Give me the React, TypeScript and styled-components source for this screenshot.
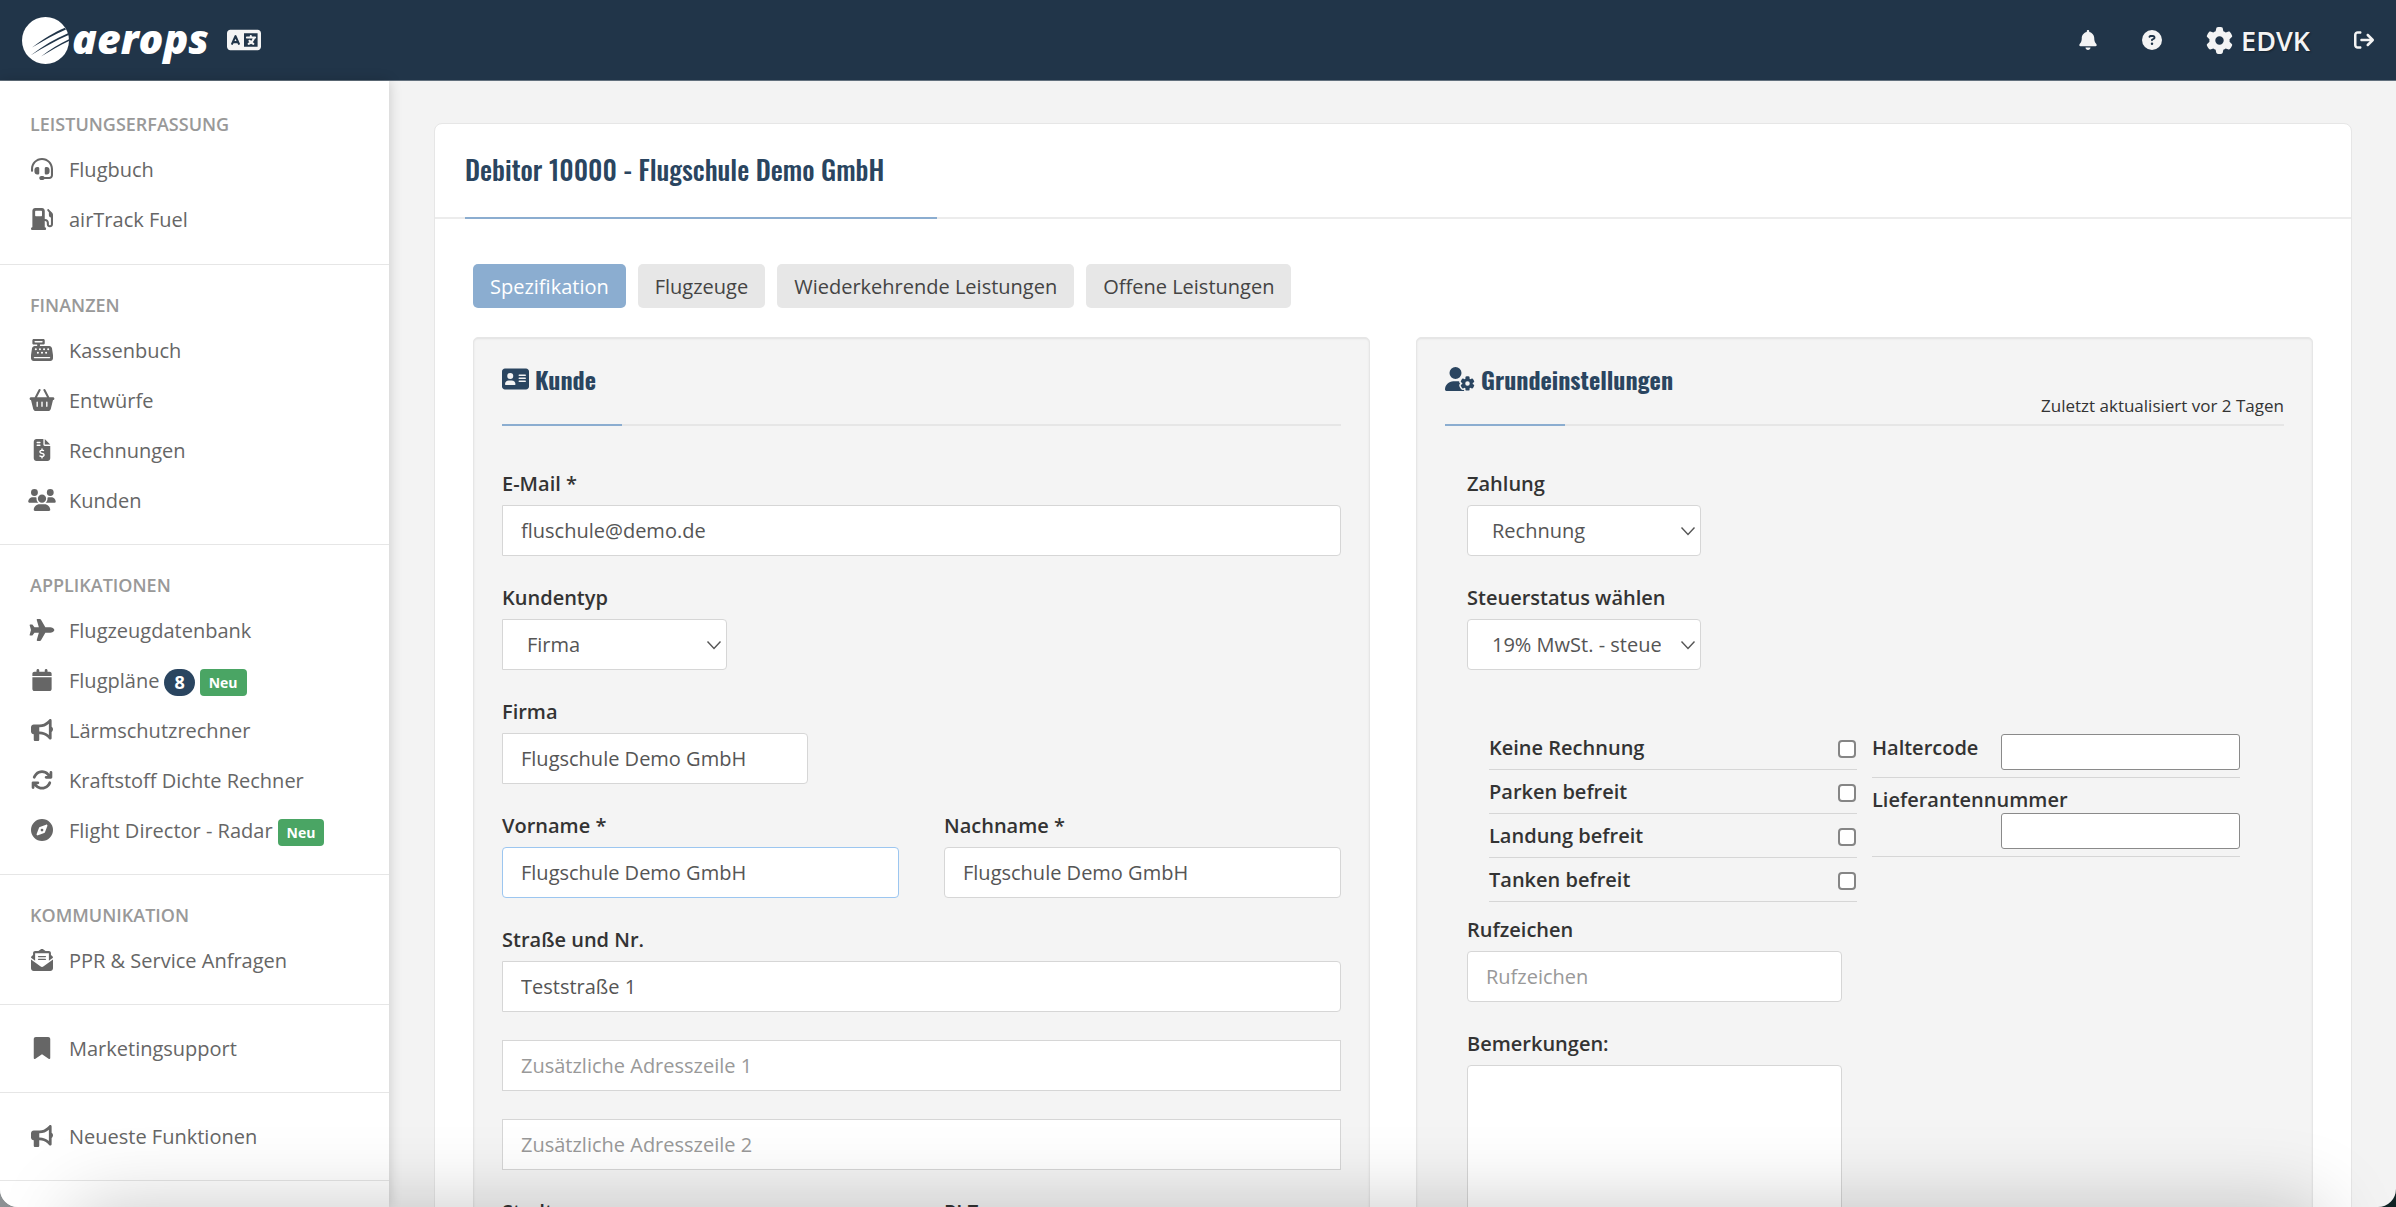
import React, { useId } from 'react';
import styled, { createGlobalStyle, css } from 'styled-components';
import {
  FaAddressCard,
  FaArrowRightFromBracket,
  FaArrowsRotate,
  FaBasketShopping,
  FaBell,
  FaBookmark,
  FaBullhorn,
  FaCalendar,
  FaCashRegister,
  FaCircleQuestion,
  FaCompass,
  FaEnvelopeOpenText,
  FaFileInvoiceDollar,
  FaGasPump,
  FaGear,
  FaHeadset,
  FaLanguage,
  FaPlane,
  FaUserGear,
  FaUsers,
} from 'react-icons/fa6';

const color = {
  navy: '#213549',
  heading: '#2a4560',
  blue: '#8badd0',
  canvas: '#f3f3f3',
  panel: '#f4f4f4',
  line: '#e6e6e6',
  rule: '#d6d6d6',
  menu: '#666666',
  text: '#333333',
  value: '#555555',
  muted: '#999999',
  green: '#4aa564',
};

const GlobalStyle = createGlobalStyle`
  *, *::before, *::after { box-sizing: border-box; }
  html, body, #root { height: 100%; }
  body {
    margin: 0;
    background: linear-gradient(to right, #8c9093, #0e2224);
    color: ${color.text};
    font: 20px/27px "Open Sans", "Noto Sans", sans-serif;
  }
  button, input, select, textarea { font: inherit; color: inherit; }
  a { color: inherit; text-decoration: none; }
`;

const Shell = styled.div`
  position: relative;
  display: flex;
  flex-direction: column;
  height: 100vh;
  overflow: hidden;
  border-radius: 0 0 18px 18px;
  background: ${color.canvas};
`;

/* Soft shade that lies over the lower edge of the window. */
const BottomShade = styled.div`
  position: absolute;
  top: 100%;
  left: 76px;
  right: 76px;
  height: 200px;
  box-shadow: 0 0 80px 0 rgba(0, 0, 0, 0.22);
  pointer-events: none;
`;

/* ---------- top bar ---------- */

const TopBar = styled.header`
  display: flex;
  align-items: center;
  flex: none;
  height: 81px;
  padding: 0 22px;
  background: ${color.navy};
  border-bottom: 1px solid #62707d;
  color: #f4f4f4;
`;

const Brand = styled.a`
  display: flex;
  align-items: center;
  gap: 3px;
  color: #fff;
  svg { display: block; width: 47px; height: 47px; }
`;

const BrandName = styled.span`
  padding-bottom: 4px;
  font: italic 800 41px/48px "Open Sans", sans-serif;
`;

const LanguageButton = styled.button`
  display: flex;
  margin-left: 18px;
  padding: 0;
  border: 0;
  background: none;
  svg { width: 34px; height: 28px; }
`;

const TopActions = styled.nav`
  display: flex;
  align-items: center;
  gap: 44px;
  margin-left: auto;
`;

const TopAction = styled.a<{ $large?: boolean }>`
  display: flex;
  align-items: center;
  gap: 8px;
  font-size: 27px;
  font-weight: 600;
  text-shadow: 1px 1px 2px rgba(0, 0, 0, 0.4);
  svg { display: block; width: auto; height: ${p => (p.$large ? 27 : 20)}px; }
`;

/* ---------- side bar ---------- */

const Body = styled.div`
  display: flex;
  flex: 1;
  min-height: 0;
`;

const SideBar = styled.aside`
  position: relative;
  flex: none;
  width: 389px;
  background: #fff;
  box-shadow: 0 0 12px rgba(0, 0, 0, 0.18);
`;

const MenuGroup = styled.section<{ $first?: boolean; $plain?: boolean }>`
  padding: ${p => (p.$first ? '23px 30px 20px' : p.$plain ? '18px 30px 19px' : '20px 30px 19px')};
  & + & { border-top: 1px solid ${color.line}; }
`;

const MenuTitle = styled.h2`
  margin: 0;
  color: ${color.muted};
  font-size: 18px;
  font-weight: 600;
  line-height: 40px;
  text-transform: uppercase;
`;

const MenuList = styled.ul`
  margin: 0;
  padding: 0;
  list-style: none;
`;

const MenuLink = styled.a`
  display: flex;
  align-items: center;
  height: 50px;
  color: ${color.menu};
  white-space: nowrap;
`;

const MenuIcon = styled.span`
  display: flex;
  justify-content: center;
  width: 24px;
  margin-right: 15px;
  svg { flex: none; width: 28px; height: 22px; }
`;

const Badge = styled.span<{ $round?: boolean }>`
  margin: 4px 0 0 5px;
  padding: 0 ${p => (p.$round ? 10 : 9)}px;
  border-radius: ${p => (p.$round ? 14 : 4)}px;
  background: ${p => (p.$round ? color.heading : color.green)};
  color: #fff;
  font-size: ${p => (p.$round ? 18 : 14)}px;
  font-weight: 700;
`;

/* ---------- content ---------- */

const Main = styled.main`
  flex: 1;
  min-width: 0;
  padding: 42px 44px 0 45px;
  overflow: auto;
  scrollbar-width: none;
`;

const Card = styled.article`
  border: 1px solid ${color.line};
  border-radius: 8px;
  background: #fff;
`;

const CardHeader = styled.header`
  padding: 28px 0 0 30px;
  border-bottom: 2px solid #ececec;
`;

const CardTitle = styled.h1`
  margin: 0 0 -2px;
  color: ${color.heading};
  font: 500 27px/34px "Oswald", "Liberation Sans Narrow", "Open Sans", sans-serif;
  &::after {
    content: "";
    display: block;
    width: 25%;
    height: 2px;
    margin-top: 31px;
    background: ${color.blue};
  }
`;

const CardBody = styled.div`
  padding: 45px 38px 0;
`;

const Tabs = styled.div`
  display: flex;
  gap: 12px;
  margin-bottom: 29px;
`;

const Tab = styled.button<{ $active?: boolean }>`
  height: 44px;
  padding: 0 17px;
  border: 0;
  border-radius: 5px;
  background: ${p => (p.$active ? color.blue : '#e7e7e7')};
  color: ${p => (p.$active ? '#fff' : '#444')};
`;

const Columns = styled.form`
  display: grid;
  grid-template-columns: 1fr 1fr;
  gap: 46px;
`;

const Panel = styled.section`
  min-width: 0;
  padding: 23px 28px 60px;
  border: 1px solid ${color.line};
  border-radius: 5px;
  background: ${color.panel};
  box-shadow: inset 0 1px 2px rgba(0, 0, 0, 0.08);
`;

const PanelHeader = styled.header`
  display: flex;
  align-items: flex-end;
  justify-content: space-between;
  height: 65px;
  margin-bottom: 44px;
  border-bottom: 2px solid ${color.line};
`;

const PanelTitle = styled.h2`
  display: flex;
  flex-direction: column;
  align-self: stretch;
  justify-content: space-between;
  margin: 0 0 -2px;
  color: ${color.heading};
  font: 700 24px/36px "Oswald", "Liberation Sans Narrow", "Open Sans", sans-serif;
  &::after {
    content: "";
    width: 120px;
    height: 2px;
    background: ${color.blue};
  }
`;

const PanelTitleText = styled.span<{ $icon: number }>`
  display: flex;
  align-items: center;
  gap: 6px;
  svg { width: ${p => p.$icon}px; height: 24px; }
`;

const Updated = styled.p`
  margin: 0 0 5px;
  font-size: 17px;
`;

const Inset = styled.div`
  padding: 0 22px;
`;

const Field = styled.div`
  display: flex;
  flex-direction: column;
  align-items: flex-start;
  gap: 8px;
  min-width: 0;
  margin-bottom: 28px;
`;

const Label = styled.label`
  font-weight: 600;
`;

const radius = { all: '4px', right: '0 4px 4px 0', none: '0' };
type Corners = keyof typeof radius;

const box = css<{ $width?: string; $corners?: Corners }>`
  width: ${p => p.$width ?? '100%'};
  border: 1px solid ${color.rule};
  border-radius: ${p => radius[p.$corners ?? 'all']};
  background-color: #fff;
  color: ${color.value};
  outline: 0;
`;

const TextInput = styled.input<{ $width?: string; $corners?: Corners; $active?: boolean }>`
  ${box}
  height: 51px;
  padding: 0 18px;
  ${p => p.$active && 'border-color: #9cc6f0;'}
  &::placeholder { color: ${color.muted}; opacity: 1; }
`;

const TextArea = styled.textarea<{ $width?: string; $corners?: Corners }>`
  ${box}
  display: block;
  height: 240px;
  padding: 12px 18px;
  resize: none;
`;

const SelectWrap = styled.div<{ $width: string }>`
  display: grid;
  align-items: center;
  width: ${p => p.$width};
  & > * { grid-area: 1 / 1; }
  svg {
    justify-self: end;
    width: 16px;
    height: 10px;
    margin-right: 5px;
    pointer-events: none;
  }
`;

const Select = styled.select<{ $width?: string; $corners?: Corners }>`
  ${box}
  appearance: none;
  height: 51px;
  padding: 0 39px 0 24px;
`;

const Pair = styled.div`
  display: grid;
  grid-template-columns: 1fr 1fr;
  gap: 45px;
`;

const Options = styled.div`
  display: grid;
  grid-template-columns: 1fr 1fr;
  align-items: start;
  gap: 15px;
  margin: 56px 0 14px;
  padding: 0 22px;
`;

const CheckRow = styled.div`
  display: flex;
  align-items: center;
  justify-content: space-between;
  min-height: 43px;
  padding: 8px 0;
  border-bottom: 1px solid ${color.rule};
`;

const Check = styled.input`
  appearance: none;
  width: 18px;
  height: 18px;
  margin: 2px 1px 0;
  border: 2px solid #858585;
  border-radius: 4px;
  background: #fff;
  &:checked { background: ${color.blue}; }
`;

const CodeRow = styled.div<{ $stacked?: boolean }>`
  display: grid;
  grid-template-columns: ${p => (p.$stacked ? '1fr' : '129px 1fr')};
  padding: 8px 0 7px;
  border-bottom: 1px solid ${color.rule};
`;

const CodeInput = styled.input<{ $indent?: boolean }>`
  width: auto;
  min-width: 0;
  height: 36px;
  margin-left: ${p => (p.$indent ? 129 : 0)}px;
  padding: 0 6px;
  border: 1px solid #8a8a8a;
  border-radius: 3px;
  background: #fff;
`;

/* ---------- parts ---------- */

const Logo = () => (
  <svg viewBox="0 0 47 47" aria-hidden="true">
    <circle cx="23.5" cy="23.5" r="23.5" fill="#fff" />
    <g fill={color.navy}>
      <path d="M10 30.500C22 21.500 32 15.500 43 10.800l1 1.700C32 17.500 22 23.500 10 30.500z" />
      <path d="M8.500 38.500C21 29 33 21.500 46 16.200l.6 1.900C34 23.500 22 30.500 8.500 38.500z" />
      <path d="M19 39.500C28 32.500 37 27 47 22.200v1.900C37 28.800 29 33.500 19 39.500z" />
    </g>
  </svg>
);

const Chevron = () => (
  <svg viewBox="0 0 16 10" aria-hidden="true">
    <path d="M1.500 1.500 8 8.500l6.500-7" fill="none" stroke="#555" strokeWidth="1.400" />
  </svg>
);

type Item = { icon: React.ReactNode; text: string; count?: number; isNew?: boolean };
type Group = { title?: string; items: Item[] };

const groups: Group[] = [
  {
    title: 'Leistungserfassung',
    items: [
      { icon: <FaHeadset />, text: 'Flugbuch' },
      { icon: <FaGasPump />, text: 'airTrack Fuel' },
    ],
  },
  {
    title: 'Finanzen',
    items: [
      { icon: <FaCashRegister />, text: 'Kassenbuch' },
      { icon: <FaBasketShopping />, text: 'Entwürfe' },
      { icon: <FaFileInvoiceDollar />, text: 'Rechnungen' },
      { icon: <FaUsers />, text: 'Kunden' },
    ],
  },
  {
    title: 'Applikationen',
    items: [
      { icon: <FaPlane />, text: 'Flugzeugdatenbank' },
      { icon: <FaCalendar />, text: 'Flugpläne', count: 8, isNew: true },
      { icon: <FaBullhorn />, text: 'Lärmschutzrechner' },
      { icon: <FaArrowsRotate />, text: 'Kraftstoff Dichte Rechner' },
      { icon: <FaCompass />, text: 'Flight Director - Radar', isNew: true },
    ],
  },
  { title: 'Kommunikation', items: [{ icon: <FaEnvelopeOpenText />, text: 'PPR & Service Anfragen' }] },
  { items: [{ icon: <FaBookmark />, text: 'Marketingsupport' }] },
  { items: [{ icon: <FaBullhorn />, text: 'Neueste Funktionen' }] },
  { items: [] },
];

const Menu = () => (
  <SideBar>
    {groups.map((group, i) => (
      <MenuGroup key={i} $first={i === 0} $plain={!group.title}>
        {group.title && <MenuTitle>{group.title}</MenuTitle>}
        <MenuList>
          {group.items.map(item => (
            <li key={item.text}>
              <MenuLink href="#">
                <MenuIcon>{item.icon}</MenuIcon>
                {item.text}
                {item.count && <Badge $round>{item.count}</Badge>}
                {item.isNew && <Badge>Neu</Badge>}
              </MenuLink>
            </li>
          ))}
        </MenuList>
      </MenuGroup>
    ))}
  </SideBar>
);

type TextFieldProps = {
  label?: string;
  value?: string;
  placeholder?: string;
  width?: string;
  corners?: Corners;
  active?: boolean;
};

const TextField = ({ label, value, placeholder, width, corners, active }: TextFieldProps) => {
  const id = useId();
  return (
    <Field>
      {label && <Label htmlFor={id}>{label}</Label>}
      <TextInput
        id={id}
        type="text"
        defaultValue={value}
        placeholder={placeholder}
        aria-label={label ? undefined : placeholder}
        $width={width}
        $corners={corners}
        $active={active}
      />
    </Field>
  );
};

type SelectFieldProps = { label: string; options: string[]; width: string; corners?: Corners };

const SelectField = ({ label, options, width, corners }: SelectFieldProps) => {
  const id = useId();
  return (
    <Field>
      <Label htmlFor={id}>{label}</Label>
      <SelectWrap $width={width}>
        <Select id={id} $corners={corners}>
          {options.map(o => (
            <option key={o}>{o}</option>
          ))}
        </Select>
        <Chevron />
      </SelectWrap>
    </Field>
  );
};

const CheckField = ({ label }: { label: string }) => {
  const id = useId();
  return (
    <CheckRow>
      <Label htmlFor={id}>{label}</Label>
      <Check id={id} type="checkbox" />
    </CheckRow>
  );
};

const CodeField = ({ label, stacked }: { label: string; stacked?: boolean }) => {
  const id = useId();
  return (
    <CodeRow $stacked={stacked}>
      <Label htmlFor={id}>{label}</Label>
      <CodeInput id={id} type="text" $indent={stacked} />
    </CodeRow>
  );
};

export default function App() {
  const notesId = useId();
  return (
    <>
      <GlobalStyle />
      <Shell>
        <TopBar>
          <Brand href="#">
            <Logo />
            <BrandName>aerops</BrandName>
          </Brand>
          <LanguageButton type="button" aria-label="Sprache">
            <FaLanguage />
          </LanguageButton>
          <TopActions>
            <TopAction href="#" aria-label="Benachrichtigungen"><FaBell /></TopAction>
            <TopAction href="#" aria-label="Hilfe"><FaCircleQuestion /></TopAction>
            <TopAction href="#" $large><FaGear />EDVK</TopAction>
            <TopAction href="#" aria-label="Abmelden"><FaArrowRightFromBracket /></TopAction>
          </TopActions>
        </TopBar>
        <Body>
          <Menu />
          <Main>
            <Card>
              <CardHeader>
                <CardTitle>Debitor 10000 - Flugschule Demo GmbH</CardTitle>
              </CardHeader>
              <CardBody>
                <Tabs>
                  <Tab type="button" $active>Spezifikation</Tab>
                  <Tab type="button">Flugzeuge</Tab>
                  <Tab type="button">Wiederkehrende Leistungen</Tab>
                  <Tab type="button">Offene Leistungen</Tab>
                </Tabs>
                <Columns>
                  <Panel>
                    <PanelHeader>
                      <PanelTitle>
                        <PanelTitleText $icon={27}><FaAddressCard />Kunde</PanelTitleText>
                      </PanelTitle>
                    </PanelHeader>
                    <TextField label="E-Mail *" value="fluschule@demo.de" corners="right" />
                    <SelectField label="Kundentyp" options={['Firma', 'Privat']} width="225px" corners="right" />
                    <TextField label="Firma" value="Flugschule Demo GmbH" width="306px" corners="right" />
                    <Pair>
                      <TextField label="Vorname *" value="Flugschule Demo GmbH" active />
                      <TextField label="Nachname *" value="Flugschule Demo GmbH" />
                    </Pair>
                    <TextField label="Straße und Nr." value="Teststraße 1" corners="right" />
                    <TextField placeholder="Zusätzliche Adresszeile 1" corners="none" />
                    <TextField placeholder="Zusätzliche Adresszeile 2" corners="none" />
                    <Pair>
                      <TextField label="Stadt" />
                      <TextField label="PLZ" />
                    </Pair>
                  </Panel>
                  <Panel>
                    <PanelHeader>
                      <PanelTitle>
                        <PanelTitleText $icon={30}><FaUserGear />Grundeinstellungen</PanelTitleText>
                      </PanelTitle>
                      <Updated>Zuletzt aktualisiert vor 2 Tagen</Updated>
                    </PanelHeader>
                    <Inset>
                      <SelectField label="Zahlung" options={['Rechnung', 'Bar']} width="234px" />
                      <SelectField
                        label="Steuerstatus wählen"
                        options={['19% MwSt. - steuerpflichtig', '0% MwSt. - steuerfrei']}
                        width="234px"
                      />
                      <Options>
                        <div>
                          <CheckField label="Keine Rechnung" />
                          <CheckField label="Parken befreit" />
                          <CheckField label="Landung befreit" />
                          <CheckField label="Tanken befreit" />
                        </div>
                        <div>
                          <CodeField label="Haltercode" />
                          <CodeField label="Lieferantennummer" stacked />
                        </div>
                      </Options>
                      <Pair>
                        <TextField label="Rufzeichen" placeholder="Rufzeichen" />
                      </Pair>
                      <Pair>
                        <Field>
                          <Label htmlFor={notesId}>Bemerkungen:</Label>
                          <TextArea id={notesId} />
                        </Field>
                      </Pair>
                    </Inset>
                  </Panel>
                </Columns>
              </CardBody>
            </Card>
          </Main>
        </Body>
        <BottomShade />
      </Shell>
    </>
  );
}
